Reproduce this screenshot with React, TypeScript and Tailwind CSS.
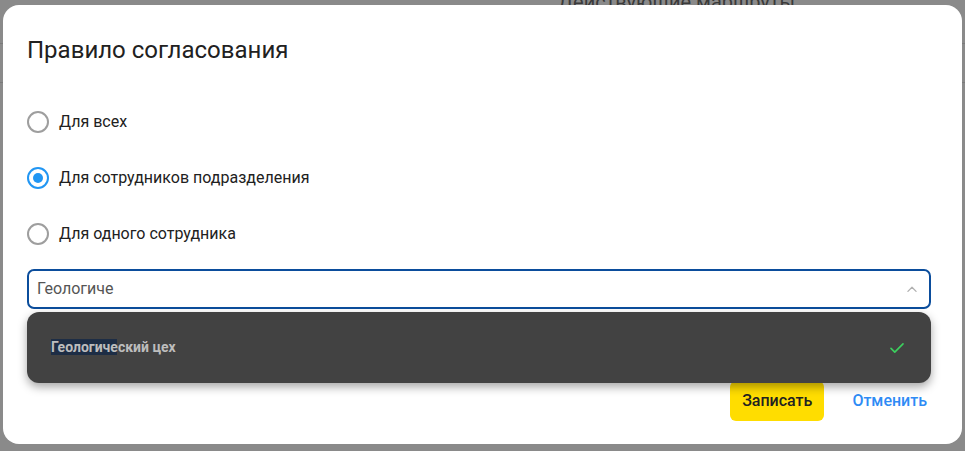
import { useState } from 'react'

const options = ['Для всех', 'Для сотрудников подразделения', 'Для одного сотрудника']

function Radio({ checked }: { checked: boolean }) {
  return (
    <span
      className={`flex h-[22px] w-[22px] items-center justify-center rounded-full border-2 ${
        checked ? 'border-[#2196f3]' : 'border-[#9e9e9e]'
      }`}
    >
      {checked && <span className="h-[10px] w-[10px] rounded-full bg-[#2196f3]" />}
    </span>
  )
}

export default function App() {
  const [selected, setSelected] = useState(1)

  return (
    <div className="relative h-[451px] w-full overflow-hidden bg-[#8a8a8a] font-['Roboto',sans-serif]">
      {/* page behind the overlay */}
      <div className="flex h-[44px] border-b border-[#7a7a7a]">
        <div className="ml-[558px] mt-[-13px] text-[20px] text-[#3a3a3a]">Действующие маршруты</div>
      </div>
      <div className="h-[39px] border-b border-[#7a7a7a]" />

      {/* dialog */}
      <div className="absolute left-[3px] top-[5px] flex h-[439px] w-[959px] flex-col rounded-[16px] bg-white pl-6 pr-[31px] pt-[31px]">
        <h2 className="text-[24px] leading-[28px] text-[#212121]">Правило согласования</h2>

        <div className="mt-[47px] flex flex-col gap-[34px]">
          {options.map((label, i) => (
            <label key={label} className="flex h-[22px] cursor-pointer items-center gap-[10px]" onClick={() => setSelected(i)}>
              <Radio checked={selected === i} />
              <span className="text-[16px] text-[#212121]">{label}</span>
            </label>
          ))}
        </div>

        <div className="relative mt-[24px]">
          <div className="flex h-[40px] items-center rounded-[7px] border-2 border-[#0b4d9c] pl-[8px] pr-[10px]">
            <span className="flex-1 text-[16px] text-[#555]">Геологиче</span>
            <svg width="14" height="14" viewBox="0 0 24 24" fill="none" stroke="#b0b0b0" strokeWidth="2.2" strokeLinecap="round" strokeLinejoin="round">
              <path d="M5 16l7-7 7 7" />
            </svg>
          </div>

          <div className="absolute left-0 right-0 top-[43px] z-10 flex h-[71px] items-center rounded-[12px] bg-[#424242] pl-[24px] pr-[25px] shadow-[0_4px_10px_rgba(0,0,0,0.35)]">
            <span className="flex-1 text-[14px] font-bold text-[#bdbdbd]">
              <span className="mr-[-7px] bg-[#1d2d45] pr-[7px]">Геологич</span>еский цех
            </span>
            <svg width="18" height="18" viewBox="0 0 24 24" fill="none" stroke="#3ccf5e" strokeWidth="2.2" strokeLinecap="round" strokeLinejoin="round">
              <path d="M4 12.5l5 5L20 6.5" />
            </svg>
          </div>
        </div>

        <div className="mt-[72px] flex items-center justify-end gap-[28px] pr-[4px]">
          <button className="h-[40px] rounded-[6px] bg-[#ffdd00] px-[12px] text-[16px] font-medium text-[#212121]">Записать</button>
          <button className="text-[16px] font-medium text-[#2e8bf5]">Отменить</button>
        </div>
      </div>
    </div>
  )
}
